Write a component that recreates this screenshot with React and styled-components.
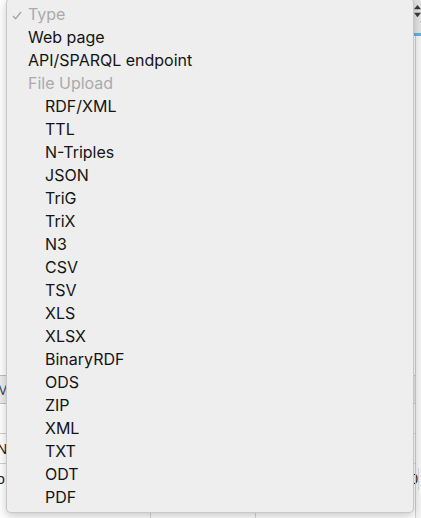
import React from 'react';
import styled, { createGlobalStyle } from 'styled-components';

const GlobalStyle = createGlobalStyle`
  * { box-sizing: border-box; }
  html, body { margin: 0; padding: 0; background: #ffffff; }
  body { font-family: 'Inter', 'Liberation Sans', sans-serif; }
`;

const OPTIONS = [
  { label: 'Type', kind: 'header', checked: true },
  { label: 'Web page', kind: 'item' },
  { label: 'API/SPARQL endpoint', kind: 'item' },
  { label: 'File Upload', kind: 'header' },
  ...['RDF/XML', 'TTL', 'N-Triples', 'JSON', 'TriG', 'TriX', 'N3', 'CSV', 'TSV', 'XLS',
    'XLSX', 'BinaryRDF', 'ODS', 'ZIP', 'XML', 'TXT', 'ODT', 'PDF'].map((label) => ({ label, kind: 'sub' })),
];

export default function App() {
  return (
    <>
      <GlobalStyle />
      <Screen>
        <Page>
          <TopBar>
            <Stepper>
              <svg width="8" height="16" viewBox="0 0 8 16">
                <path d="M4 1 L8 6 L0 6 Z" fill="#3a3a3a" />
                <path d="M0 10 L8 10 L4 15 Z" fill="#3a3a3a" />
              </svg>
            </Stepper>
          </TopBar>
          <Rule $top={72} />
          <Rule $top={211} />
          <Table>
            <HeadRow>
              <Cell $w={154}>Mo</Cell>
              <Cell $w={105}>Name</Cell>
              <Cell>Count</Cell>
            </HeadRow>
            <Row><Cell $w={154}>l</Cell><Cell $w={105} /><Cell /></Row>
            <Row><Cell $w={154}>N</Cell><Cell $w={105} /><Cell /></Row>
            <PlainRow><Cell $w={154}>o</Cell><Cell $w={105} /><EndCell>0</EndCell></PlainRow>
            <BottomRow><Cell $w={154} /><Cell $w={105} /><Cell /></BottomRow>
          </Table>
        </Page>

        <Menu>
          {OPTIONS.map((o) => (
            <Option key={o.label} $kind={o.kind}>
              {o.checked && (
                <Check width="10" height="9" viewBox="0 0 10 9">
                  <path d="M1 5 L3.6 7.8 L9 1" fill="none" stroke="#a6a6a6" strokeWidth="1.4" />
                </Check>
              )}
              {o.label}
            </Option>
          ))}
        </Menu>
      </Screen>
    </>
  );
}

const Screen = styled.div`
  position: relative;
  width: 421px;
  height: 518px;
  overflow: hidden;
  background: #ffffff;
`;

const Page = styled.div`
  display: flex;
  flex-direction: column;
  height: 100%;
  border-right: 5px solid #f4f4f4;
  position: relative;
  &::after {
    content: '';
    position: absolute;
    top: 36px;
    bottom: 0;
    right: 0;
    width: 1px;
    background: #cfcfcf;
  }
`;

const TopBar = styled.div`
  height: 36px;
  display: flex;
  justify-content: flex-end;
`;

const Stepper = styled.div`
  width: 10px;
  margin-right: -5px;
  height: 36px;
  border-bottom: 3px solid #5fb2e0;
  background: #e2e2e2;
  display: flex;
  align-items: flex-start;
  padding: 3px 0 0 3px;
`;

const Rule = styled.div`
  margin-top: ${(p) => p.$top}px;
  height: 1px;
  background: #d2d2d2;
`;

const Table = styled.div`
  margin-top: 56px;
  display: flex;
  flex-direction: column;
  font-family: 'Liberation Sans', sans-serif;
  font-size: 14px;
  color: #1b1b1b;
  margin-left: -3px;
`;

const Row = styled.div`
  display: flex;
  height: 30px;
  border-bottom: 1px solid #d0d0d0;
`;

const HeadRow = styled(Row)`
  height: 29px;
  background: #ececec;
  border-top: 1px solid #bdbdbd;
  border-bottom: 1px solid #c4c4c4;
  color: #2a3b6b;
`;

const PlainRow = styled(Row)`
  height: 26px;
  padding-top: 4px;
  border-bottom: none;
`;

const BottomRow = styled(Row)`
  height: 40px;
  border-bottom: none;
`;

const Cell = styled.div`
  width: ${(p) => (p.$w ? `${p.$w}px` : 'auto')};
  flex: ${(p) => (p.$w ? 'none' : '1')};
  display: flex;
  align-items: center;
  border-right: 1px solid #d6d6d6;
  white-space: nowrap;
  overflow: hidden;
`;

const EndCell = styled(Cell)`
  justify-content: flex-end;
  margin-right: -3px;
`;

const Menu = styled.div`
  position: absolute;
  left: 6px;
  top: -2px;
  width: 408px;
  padding: 4px 0 3px;
  background: #eeeeee;
  border: 1px solid rgba(0, 0, 0, 0.16);
  border-radius: 5px;
  box-shadow: 0 3px 10px rgba(0, 0, 0, 0.22);
  display: flex;
  flex-direction: column;
  font-family: 'Inter', 'Liberation Sans', sans-serif;
  font-size: 16px;
`;

const Option = styled.div`
  position: relative;
  height: 23px;
  line-height: 23px;
  padding-left: ${(p) => (p.$kind === 'sub' ? 38 : 21)}px;
  color: ${(p) => (p.$kind === 'header' ? '#aaaaaa' : '#141414')};
  white-space: nowrap;
`;

const Check = styled.svg`
  position: absolute;
  left: 5px;
  top: 8px;
`;
